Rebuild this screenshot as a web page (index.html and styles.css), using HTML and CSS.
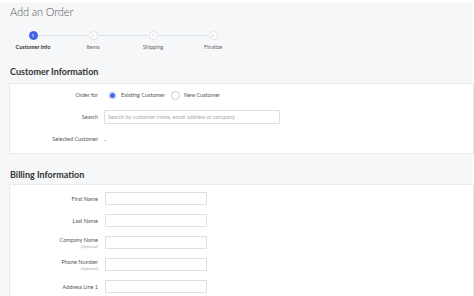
FILE: index.html
```html
<!DOCTYPE html>
<html>
<head>
<meta charset="utf-8">
<link rel="stylesheet" href="styles.css">
</head>
<body>
<div class="page">
  <h1 class="title">Add an Order</h1>
  <div class="stepper">
    <div class="step active"><span class="dot">1</span><span class="step-label">Customer Info</span></div>
    <div class="step"><span class="dot">2</span><span class="step-label">Items</span></div>
    <div class="step"><span class="dot">3</span><span class="step-label">Shipping</span></div>
    <div class="step last"><span class="dot">4</span><span class="step-label">Finalize</span></div>
  </div>

  <h2 class="section-title">Customer Information</h2>
  <div class="card">
    <div class="row">
      <div class="label">Order for</div>
      <div class="control radios">
        <span class="radio checked"></span><span class="radio-text">Existing Customer</span>
        <span class="radio"></span><span class="radio-text">New Customer</span>
      </div>
    </div>
    <div class="row">
      <div class="label">Search</div>
      <div class="control"><div class="input wide"><span class="placeholder">Search by customer name, email address or company</span></div></div>
    </div>
    <div class="row">
      <div class="label">Selected Customer</div>
      <div class="control"><span class="value">-</span></div>
    </div>
  </div>

  <h2 class="section-title billing">Billing Information</h2>
  <div class="card billing-card">
    <div class="frow"><div class="label">First Name</div><div class="input"></div></div>
    <div class="frow"><div class="label">Last Name</div><div class="input"></div></div>
    <div class="frow"><div class="label">Company Name<span class="opt">(Optional)</span></div><div class="input"></div></div>
    <div class="frow"><div class="label">Phone Number<span class="opt">(Optional)</span></div><div class="input"></div></div>
    <div class="frow"><div class="label">Address Line 1</div><div class="input"></div></div>
  </div>
</div>
</body>
</html>
```

FILE: styles.css
```css
* { box-sizing: border-box; }
html, body { margin: 0; padding: 0; background: #ffffff; height: 100%; overflow: hidden; }
body { font-family: "Lato", "Open Sans", sans-serif; color: #444; }

.page {
  margin-top: 2px;
  margin-right: 2px;
  background: #f6f7f9;
  padding: 0 0 0 9px;
  min-height: 300px;
}

.title {
  margin: 0;
  padding: 2px 0 0 1px;
  font-size: 11px;
  line-height: 16px;
  font-weight: 300;
  letter-spacing: -0.1px;
  color: #555;
}

.stepper {
  display: flex;
  margin-left: -6px;
  margin-top: 11px;
  height: 35px;
}
.step {
  position: relative;
  width: 60px;
  display: flex;
  flex-direction: column;
  align-items: center;
}
.step::after {
  content: "";
  position: absolute;
  left: 35px;
  top: 4px;
  width: 50px;
  height: 1px;
  background: #dfe2e7;
}
.step.last::after { display: none; }
.dot {
  width: 9px;
  height: 9px;
  border-radius: 50%;
  border: 1px solid #dfe2e7;
  background: #fff;
  color: #bbb;
  font-size: 4px;
  line-height: 7px;
  text-align: center;
}
.step.active .dot {
  background: #3d63ea;
  border-color: #3d63ea;
  color: #fff;
  font-weight: 700;
}
.step-label {
  margin-top: 4px;
  font-size: 5.5px;
  color: #666;
}
.step.active .step-label { color: #333; font-weight: 700; }

.section-title {
  margin: 0;
  padding-left: 1px;
  font-size: 9px;
  line-height: 12px;
  font-weight: 700;
  color: #333;
}
.section-title.billing { margin-top: 15px; }

.card {
  background: #fff;
  border: 1px solid #e8eaee;
  margin-right: -2px;
  margin-top: 5px;
  padding: 0 0 3px 0;
}

.row {
  display: flex;
  align-items: center;
  height: 22px;
}
.label {
  width: 88px;
  text-align: right;
  font-size: 5.5px;
  color: #555;
  display: flex;
  flex-direction: column;
  align-items: flex-end;
}
.control {
  margin-left: 6px;
  display: flex;
  align-items: center;
}
.radio {
  width: 9px;
  height: 9px;
  border-radius: 50%;
  border: 1px solid #c8ccd3;
  background: #fff;
}
.radio.checked {
  border: 2px solid #dfe5fc;
  background: #4a66e8;
  margin-left: 4px;
}
.radio-text {
  font-size: 5.5px;
  color: #555;
  margin: 0 6px 0 4px;
}
.input {
  height: 13px;
  border: 1px solid #dcdfe4;
  background: #fff;
  width: 102px;
}
.input.wide {
  width: 176px;
  height: 14px;
  display: flex;
  align-items: center;
  padding-left: 3px;
}
.placeholder { font-size: 5.5px; color: #aaa; }
.value { font-size: 6px; color: #666; }

.billing-card { margin-top: 3px; padding: 7px 0 10px 0; }
.frow {
  display: flex;
  align-items: center;
  height: 13px;
  margin-bottom: 9px;
}
.frow .input { margin-left: 7px; }
.opt { font-size: 4px; color: #aaa; margin-top: 1px; }
```
